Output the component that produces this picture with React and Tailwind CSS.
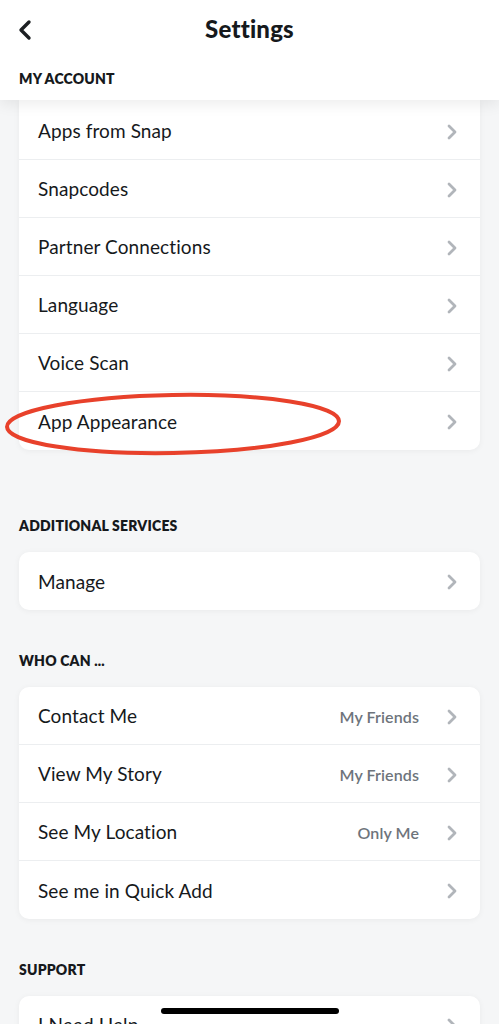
const font = { fontFamily: 'Lato, "Noto Sans", sans-serif' };

function Chevron() {
  return (
    <svg width="12" height="16" viewBox="0 0 12 16" fill="none">
      <path d="M3 2L9 8L3 14" stroke="#b1b5ba" strokeWidth="2.8" strokeLinecap="round" strokeLinejoin="round" />
    </svg>
  );
}

function Row({ label, value, last }) {
  return (
    <div
      className={`h-[58px] flex items-center justify-between pl-[19px] pr-[22px] pt-[2px] ${
        last ? '' : 'border-b border-[#eceef0]'
      }`}
    >
      <span className="text-[19px] text-[#16191c] tracking-[0.1px]">{label}</span>
      <div className="flex items-center gap-[27px]">
        {value && <span className="text-[16px] font-semibold text-[#6e747b] tracking-[0.1px]">{value}</span>}
        <Chevron />
      </div>
    </div>
  );
}

function SectionLabel({ children, className = '' }) {
  return (
    <div className={`px-[19px] text-[14px] font-extrabold text-[#16191c] leading-[18px] tracking-[0.2px] ${className}`}>
      {children}
    </div>
  );
}

function Card({ children, className = '' }) {
  return (
    <div
      className={`mx-[19px] bg-white rounded-[10px] shadow-[0_1px_6px_rgba(0,0,0,0.05)] overflow-hidden ${className}`}
    >
      {children}
    </div>
  );
}

export default function App() {
  return (
    <div className="relative w-[499px] h-[1024px] bg-[#f5f6f7] overflow-hidden" style={font}>
      {/* Header */}
      <div className="relative z-10 bg-white h-[100px] shadow-[0_4px_14px_rgba(0,0,0,0.08)]">
        <div className="h-[58px] flex items-center justify-center relative">
          <svg
            className="absolute left-[17px] top-[19px]"
            width="16"
            height="22"
            viewBox="0 0 16 22"
            fill="none"
          >
            <path d="M12 3L4 11L12 19" stroke="#1c1f22" strokeWidth="3.4" strokeLinecap="round" strokeLinejoin="round" />
          </svg>
          <span className="text-[24px] font-black text-[#16191c] tracking-[0.2px]">Settings</span>
        </div>
        <SectionLabel className="pt-[12px]">MY ACCOUNT</SectionLabel>
      </div>

      {/* My account card (scrolled under header) */}
      <div className="relative">
        <Card className="rounded-t-none">
          <div className="h-[2px]" />
          <Row label="Apps from Snap" />
          <Row label="Snapcodes" />
          <Row label="Partner Connections" />
          <Row label="Language" />
          <Row label="Voice Scan" />
          <Row label="App Appearance" last />
        </Card>
        {/* red highlight */}
        <svg className="absolute left-[3px] top-[290px]" width="342" height="68" viewBox="0 0 342 68" fill="none">
          <ellipse cx="170" cy="34" rx="166" ry="29" transform="rotate(-1 170 34)" stroke="#e8412b" strokeWidth="4" />
        </svg>
      </div>

      <SectionLabel className="mt-[67px]">ADDITIONAL SERVICES</SectionLabel>
      <Card className="mt-[17px]">
        <Row label="Manage" last />
      </Card>

      <SectionLabel className="mt-[42px]">WHO CAN ...</SectionLabel>
      <Card className="mt-[17px]">
        <Row label="Contact Me" value="My Friends" />
        <Row label="View My Story" value="My Friends" />
        <Row label="See My Location" value="Only Me" />
        <Row label="See me in Quick Add" last />
      </Card>

      <SectionLabel className="mt-[42px]">SUPPORT</SectionLabel>
      <Card className="mt-[17px]">
        <Row label="I Need Help" />
      </Card>

      {/* home indicator */}
      <div className="absolute left-[161px] top-[1008px] w-[178px] h-[6px] rounded-full bg-black" />
    </div>
  );
}
